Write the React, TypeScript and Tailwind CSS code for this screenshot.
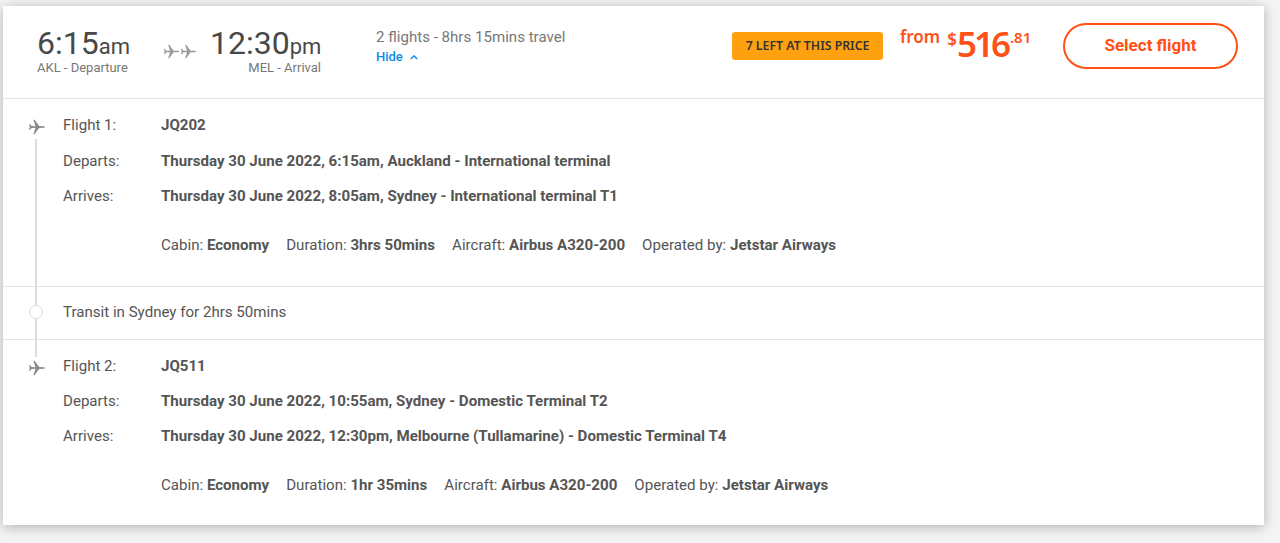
function Plane({ className }: { className: string }) {
  return (
    <svg viewBox="0 0 24 24" className={className} fill="currentColor">
      <path d="M1.5 8.2l.9-.3 2.4 2.9 5.2.1L7.2 2.4h1.5l6.2 8.4 5.3.1c1.4 0 2.6.5 2.6 1.1s-1.2 1.1-2.6 1.1l-5.3.1-6.2 8.4H7.2l2.8-8.5-5.2.1-2.4 2.9-.9-.3.9-3.7z" />
    </svg>
  );
}

type Flight = {
  label: string;
  code: string;
  departs: string;
  arrives: string;
  duration: string;
  aircraft: string;
};

function Meta({ label, value }: { label: string; value: string }) {
  return (
    <span>
      {label}: <span className="font-bold">{value}</span>
    </span>
  );
}

function FlightRow({ flight }: { flight: Flight }) {
  return (
    <div className="pl-[60px]">
      <div className="flex h-[36px] items-center">
        <span className="w-[98px]">{flight.label}</span>
        <span className="font-bold">{flight.code}</span>
      </div>
      <div className="flex h-[35px] items-center">
        <span className="w-[98px]">Departs:</span>
        <span className="font-bold">{flight.departs}</span>
      </div>
      <div className="flex h-[35.5px] items-center">
        <span className="w-[98px]">Arrives:</span>
        <span className="font-bold">{flight.arrives}</span>
      </div>
      <div className="mt-[13px] flex h-[36px] items-center gap-[17px] pl-[98px]">
        <Meta label="Cabin" value="Economy" />
        <Meta label="Duration" value={flight.duration} />
        <Meta label="Aircraft" value={flight.aircraft} />
        <Meta label="Operated by" value="Jetstar Airways" />
      </div>
    </div>
  );
}

export default function App() {
  return (
    <div className="h-[543px] overflow-hidden bg-[#f4f4f4] pl-[3px] pt-[6px] font-['Roboto',sans-serif] text-[15.08px] text-[#555]">
      <div className="relative h-[519px] w-[1261px] bg-white shadow-[0_2px_12px_rgba(0,0,0,0.28)]">
        {/* header */}
        <div className="flex h-[93px] border-b border-[#e3e3e3] pt-[17px]">
          <div className="ml-[34px] w-[92px]">
            <div className="h-[38px] whitespace-nowrap text-[32px] leading-[40px] text-[#484848]">
              6:15<span className="text-[22px]">am</span>
            </div>
            <div className="text-[13px] leading-[14px] text-[#777]">AKL - Departure</div>
          </div>
          <div className="ml-[34px] mt-[20px] flex h-[20px] text-[#999]">
            <Plane className="h-[17px] w-[17px]" />
            <Plane className="h-[17px] w-[17px]" />
          </div>
          <div className="ml-[13px] w-[111px]">
            <div className="h-[38px] whitespace-nowrap text-[32px] leading-[40px] text-[#484848]">
              12:30<span className="text-[22px]">pm</span>
            </div>
            <div className="text-right text-[13px] leading-[14px] text-[#777]">MEL - Arrival</div>
          </div>
          <div className="ml-[55px] mt-[4px] w-[356px]">
            <div className="leading-[20px] text-[#777]">2 flights - 8hrs 15mins travel</div>
            <div className="mt-[1px] flex items-center gap-[7px] text-[13px] font-medium leading-[18px] text-[#0a8ee8]">
              Hide
              <svg viewBox="0 0 10 6" className="h-[5px] w-[8px]" fill="none" stroke="currentColor" strokeWidth="1.8">
                <path d="M1 5l4-4 4 4" />
              </svg>
            </div>
          </div>
          <div className="mt-[9px] flex h-[28px] w-[151px] items-center justify-center rounded-[3px] bg-[#ffa00f] font-['Noto_Sans',sans-serif] text-[12.3px] font-semibold text-[#333]">
            7 LEFT AT THIS PRICE
          </div>
          <div className="ml-[17px] flex h-[40px] w-[129px] items-start whitespace-nowrap font-['Noto_Sans',sans-serif] font-semibold text-[#ff5115]">
            <span className="mt-[4px] text-[17px] leading-[20px]">from</span>
            <span className="ml-[7px] mt-[7px] text-[17px] leading-[20px]">$</span>
            <span className="mt-[-3px] text-[35px] leading-[48px] tracking-[-3px]">516</span>
            <span className="ml-[2px] mt-[4px] text-[15px] leading-[20px]">.81</span>
          </div>
          <div className="ml-[34px] flex h-[46px] w-[175px] items-center justify-center rounded-full border-2 border-[#ff5115] text-[17px] font-bold text-[#ff5115]">
            Select flight
          </div>
        </div>

        {/* timeline */}
        <div className="absolute left-[32px] top-[133px] h-[218px] w-[1.5px] bg-[#dcdcdc]" />
        <Plane className="absolute left-[25px] top-[112px] h-[18px] w-[18px] bg-white text-[#8a8a8a]" />
        <div className="absolute left-[26px] top-[299px] h-[14px] w-[14px] rounded-full border-[1.5px] border-[#dcdcdc] bg-white" />
        <Plane className="absolute left-[25px] top-[353px] h-[18px] w-[18px] bg-white text-[#8a8a8a]" />

        <div className="h-[188px] border-b border-[#e3e3e3] pt-[8.4px]">
          <FlightRow
            flight={{
              label: "Flight 1:",
              code: "JQ202",
              departs: "Thursday 30 June 2022, 6:15am, Auckland - International terminal",
              arrives: "Thursday 30 June 2022, 8:05am, Sydney - International terminal T1",
              duration: "3hrs 50mins",
              aircraft: "Airbus A320-200",
            }}
          />
        </div>
        <div className="flex h-[53px] items-center border-b border-[#e3e3e3] pb-[2px] pl-[60px]">
          Transit in Sydney for 2hrs 50mins
        </div>
        <div className="pt-[8px]">
          <FlightRow
            flight={{
              label: "Flight 2:",
              code: "JQ511",
              departs: "Thursday 30 June 2022, 10:55am, Sydney - Domestic Terminal T2",
              arrives: "Thursday 30 June 2022, 12:30pm, Melbourne (Tullamarine) - Domestic Terminal T4",
              duration: "1hr 35mins",
              aircraft: "Airbus A320-200",
            }}
          />
        </div>
      </div>
    </div>
  );
}
